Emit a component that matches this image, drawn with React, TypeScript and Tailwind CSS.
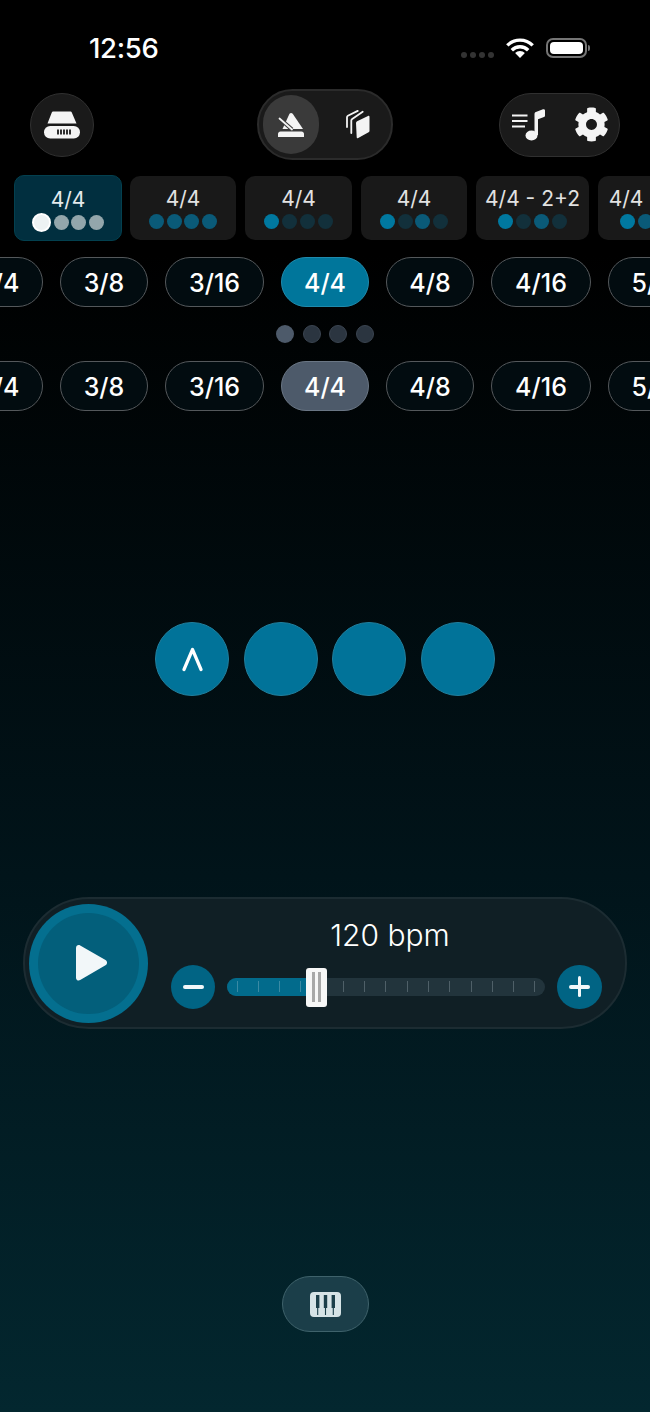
import { FaCog } from 'react-icons/fa';

type DotKind = 'strong' | 'mid' | 'faint';

interface BarCard {
  label: string;
  dots: DotKind[];
  width: string;
}

const dotClass: Record<DotKind, string> = {
  strong: 'bg-[#00789f]',
  mid: 'bg-[#0a5a78]',
  faint: 'bg-[#12303b]',
};

const cards: BarCard[] = [
  { label: '4/4', dots: ['mid', 'mid', 'mid', 'mid'], width: 'w-[106px]' },
  { label: '4/4', dots: ['strong', 'faint', 'faint', 'faint'], width: 'w-[107px]' },
  { label: '4/4', dots: ['strong', 'faint', 'mid', 'faint'], width: 'w-[106px]' },
  { label: '4/4 - 2+2', dots: ['strong', 'faint', 'mid', 'faint'], width: 'w-[113px]' },
  { label: '4/4 - 3+1', dots: ['strong', 'mid', 'faint', 'faint'], width: 'w-[113px]' },
];

const meters = [
  { label: '2/4', width: 'w-[88px]' },
  { label: '3/8', width: 'w-[88px]' },
  { label: '3/16', width: 'w-[99px]' },
  { label: '4/4', width: 'w-[88px]', selected: true },
  { label: '4/8', width: 'w-[88px]' },
  { label: '4/16', width: 'w-[100px]' },
  { label: '5/4', width: 'w-[88px]' },
];

function DriveIcon() {
  return (
    <svg width="36" height="28" viewBox="0 0 36 28">
      <path d="M9.5 0.5h16.5c1 0 1.7.5 2 1.4L32.5 12.5H3.5L7.6 1.9C8 1 8.6.5 9.5.5z" fill="#f4f4f4" />
      <rect x="0" y="15" width="36" height="12.5" rx="6.2" fill="#f4f4f4" />
      <path d="M14 18.5v5M17 18.5v5M20 18.5v5M23 18.5v5M26 18.5v5" stroke="#1a1a1a" strokeWidth="1.8" />
    </svg>
  );
}

function MetronomeIcon() {
  return (
    <svg width="26" height="24" viewBox="0 0 26 24">
      <path d="M11.5 .8c.9-1 2.300-1 3.200 0L25 16H4.500z" fill="#f4f4f4" />
      <path d="M1.500 5.500 14 16.500" stroke="#3a3a3a" strokeWidth="4" />
      <path d="M1.500 5.500 14 16.500" stroke="#f4f4f4" strokeWidth="1.800" strokeLinecap="round" />
      <path d="M2.500 18.500h21c1.400 0 2.500 1.200 2.500 2.600V24H0v-2.900c0-1.400 1.100-2.600 2.500-2.600z" fill="#f4f4f4" />
    </svg>
  );
}

function StackIcon() {
  return (
    <svg width="25" height="29" viewBox="0 0 25 29">
      <path d="M10 13c0-.8.4-1.300 1.100-1.700L22 5.900c.8-.4 1.500 0 1.500.9v14c0 .7-.3 1.200-.9 1.500l-10.400 5.800c-.9.5-1.500.1-1.500-.8z" fill="#f4f4f4" />
      <path d="M5.300 23V10.600c0-.7.3-1.200.9-1.600L16.700 1.800" stroke="#f4f4f4" strokeWidth="1.800" fill="none" strokeLinecap="round" />
      <path d="M1 17V7.300c0-.7.3-1.200.9-1.500L11.700 .9" stroke="#f4f4f4" strokeWidth="1.800" fill="none" strokeLinecap="round" />
    </svg>
  );
}

function MusicListIcon() {
  return (
    <svg width="34" height="33" viewBox="0 0 34 33">
      <path d="M0 7.5h15.5M0 13h15.5M0 18.5h13" stroke="#f4f4f4" strokeWidth="2" />
      <ellipse cx="19.5" cy="27.5" rx="6" ry="5" fill="#f4f4f4" />
      <path d="M22.5 27V6c0-1 .4-1.700 1.400-2.100L31 1.300c1.200-.4 2 .2 2 1.300v5c0 .8-.3 1.200-1 1.500l-6 2.200V27z" fill="#f4f4f4" />
    </svg>
  );
}

function WifiIcon() {
  return (
    <svg width="28" height="20" viewBox="0 0 28 20">
      <path d="M1.3 7.400a18 18 0 0 1 25.400 0" stroke="#fff" strokeWidth="3.4" fill="none" />
      <path d="M5.800 12.200a11.500 11.500 0 0 1 16.400 0" stroke="#fff" strokeWidth="3.4" fill="none" />
      <path d="M14 20l-4.900-5a6.800 6.800 0 0 1 9.800 0z" fill="#fff" />
    </svg>
  );
}

function PianoIcon() {
  return (
    <svg width="31" height="25" viewBox="0 0 31 25">
      <rect x="1" y="1" width="29" height="23" rx="3" fill="#d6e3e6" stroke="#d6e3e6" strokeWidth="2" />
      <path d="M7.700 16v7M15.500 16v7M23.300 16v7" stroke="#1b3e49" strokeWidth="1.1" />
      <rect x="6" y="3" width="3.4" height="13" fill="#1b3e49" />
      <rect x="13.800" y="3" width="3.4" height="13" fill="#1b3e49" />
      <rect x="21.600" y="3" width="3.4" height="13" fill="#1b3e49" />
    </svg>
  );
}

function MeterRow({ selectedClass }: { selectedClass: string }) {
  return (
    <div className="flex gap-[17px] ml-[-45px] h-[50px]">
      {meters.map((meter, i) => (
        <div
          key={i}
          className={`${meter.width} shrink-0 h-[50px] rounded-[25px] border-[1.5px] flex items-center justify-center pt-[3px] text-[25px] font-medium text-white ${
            meter.selected ? selectedClass : 'bg-[#020c10] border-[#54585b]'
          }`}
        >
          {meter.label}
        </div>
      ))}
    </div>
  );
}

export default function App() {
  return (
    <div
      className="w-[650px] h-[1412px] overflow-hidden flex flex-col bg-[linear-gradient(180deg,#000000_0%,#000000_18%,#01141a_62%,#03272f_100%)] text-white"
      style={{ fontFamily: 'Inter, "Noto Sans", sans-serif' }}
    >
      {/* Status bar */}
      <div className="h-[89px] shrink-0 flex items-start justify-between pt-[35px] pl-[89px] pr-[60px]">
        <span className="text-[27.5px] leading-[26px] font-medium tracking-[-0.3px]">12:56</span>
        <div className="flex items-start gap-[12px] mt-[3px]">
          <div className="flex gap-[2.7px] mt-[14px]">
            <span className="w-[6px] h-[6px] rounded-full bg-[#333333]" />
            <span className="w-[6px] h-[6px] rounded-full bg-[#333333]" />
            <span className="w-[6px] h-[6px] rounded-full bg-[#333333]" />
            <span className="w-[6px] h-[6px] rounded-full bg-[#333333]" />
          </div>
          <WifiIcon />
          <div className="flex items-center gap-[1.5px]">
            <div className="w-[41px] h-[20px] rounded-[7px] border-2 border-[#757575] p-[2px]">
              <div className="w-full h-full rounded-[4px] bg-white" />
            </div>
            <div className="w-[2px] h-[6px] rounded-r-full bg-[#757575]" />
          </div>
        </div>
      </div>

      {/* Toolbar */}
      <div className="h-[71px] shrink-0 grid grid-cols-[1fr_auto_1fr] items-center px-[30px]">
        <div className="justify-self-start w-[64px] h-[64px] rounded-full bg-[#1a1a1a] border border-[#303030] flex items-center justify-center">
          <DriveIcon />
        </div>
        <div className="w-[136px] h-[71px] rounded-[36px] bg-[#1a1a1a] border-2 border-[#2b2b2b] flex items-center pl-[4px]">
          <div className="w-[56px] h-[59px] rounded-full bg-[#3a3a3a] flex items-center justify-center">
            <MetronomeIcon />
          </div>
          <div className="ml-[27px]">
            <StackIcon />
          </div>
        </div>
        <div className="justify-self-end w-[121px] h-[64px] rounded-[32px] bg-[#1a1a1a] border border-[#303030] flex items-center pl-[12px]">
          <MusicListIcon />
          <FaCog className="ml-[28px] text-[#f4f4f4]" size={35} />
        </div>
      </div>

      {/* Bar presets */}
      <div className="mt-[15px] h-[66px] shrink-0 flex items-center gap-[9px] pl-[14px]">
        <div className="w-[108px] mr-[-1px] h-[66px] shrink-0 rounded-[10px] bg-[#012f3f] border border-[#03404f] flex flex-col items-center pt-[11px]">
          <span className="text-[21px] leading-[26px] text-[#e4eaec]">4/4</span>
          <div className="flex items-center gap-[2.7px]">
            <span className="w-[19px] h-[19px] rounded-full bg-[#edf2f3] border-2 border-white" />
            <span className="w-[15px] h-[15px] rounded-full bg-[#93a6ab]" />
            <span className="w-[15px] h-[15px] rounded-full bg-[#93a6ab]" />
            <span className="w-[15px] h-[15px] rounded-full bg-[#93a6ab]" />
          </div>
        </div>
        {cards.map((card, i) => (
          <div
            key={i}
            className={`${card.width} h-[64px] shrink-0 rounded-[10px] bg-[#191919] flex flex-col items-center pt-[10px]`}
          >
            <span className="text-[21px] leading-[26px] text-[#e2e2e2] whitespace-nowrap">{card.label}</span>
            <div className="flex items-center gap-[2.7px] mt-[2px]">
              {card.dots.map((dot, j) => (
                <span key={j} className={`w-[15px] h-[15px] rounded-full ${dotClass[dot]}`} />
              ))}
            </div>
          </div>
        ))}
      </div>

      {/* Meter selector */}
      <div className="mt-[16px]">
        <MeterRow selectedClass="bg-[#00769b] border-[#1f8aac]" />
      </div>

      {/* Page dots */}
      <div className="mt-[18px] flex justify-center gap-[8.5px]">
        <span className="w-[18px] h-[18px] rounded-full bg-[#4d5a6a]" />
        <span className="w-[18px] h-[18px] rounded-full bg-[#2b3540] border border-[#3a4450]" />
        <span className="w-[18px] h-[18px] rounded-full bg-[#2b3540] border border-[#3a4450]" />
        <span className="w-[18px] h-[18px] rounded-full bg-[#2b3540] border border-[#3a4450]" />
      </div>

      <div className="mt-[18px]">
        <MeterRow selectedClass="bg-[#4d5a6a] border-[#6a7684]" />
      </div>

      {/* Beats */}
      <div className="mt-[211px] flex justify-center gap-[14.5px]">
        <div className="w-[74px] h-[74px] rounded-full bg-[#017399] border border-[#217f9d] flex items-center justify-center">
          <svg width="21" height="25" viewBox="0 0 21 25">
            <path d="M2 22.500 10.500 2.500 19 22.500" stroke="#fff" strokeWidth="3.2" fill="none" strokeLinecap="round" strokeLinejoin="round" />
          </svg>
        </div>
        <div className="w-[74px] h-[74px] rounded-full bg-[#017399] border border-[#217f9d]" />
        <div className="w-[74px] h-[74px] rounded-full bg-[#017399] border border-[#217f9d]" />
        <div className="w-[74px] h-[74px] rounded-full bg-[#017399] border border-[#217f9d]" />
      </div>

      {/* Transport panel */}
      <div className="mt-[201px] ml-[23px] w-[604px] h-[132px] shrink-0 rounded-[66px] bg-[#101f25] border-2 border-[#1c2c32] flex items-center pl-[4px]">
        <div className="w-[119px] h-[119px] shrink-0 rounded-full bg-[#046f8f] flex items-center justify-center">
          <div className="w-[101px] h-[101px] rounded-full bg-[#035f7b] flex items-center justify-center">
            <svg width="31" height="36" viewBox="0 0 31 36" className="ml-[6px]">
              <path d="M0 3C0 .7 2.200-.6 4.200.5l25.300 14.600c2 1.200 2 4 0 5.200L4.200 35.100C2.200 36.300 0 35 0 32.700z" fill="#f2f7f9" />
            </svg>
          </div>
        </div>
        <div className="ml-[23px] w-[432px] flex flex-col">
          <div className="h-[37px] pl-[6px] flex items-center justify-center text-[30px] font-light text-white mb-[10.5px]">
            120 bpm
          </div>
          <div className="flex items-center h-[44px]">
            <div className="w-[44px] h-[44px] rounded-full bg-[#016484] flex items-center justify-center">
              <span className="w-[21px] h-[3.5px] rounded-full bg-[#f2f7f9]" />
            </div>
            <div className="relative ml-[12px] w-[318px] h-[18px] rounded-full bg-[#22343c]">
              <div className="absolute left-0 top-0 h-full w-[85px] rounded-l-full bg-[#026b8c]" />
              <div className="absolute inset-0 flex items-center justify-between px-[9.5px]">
                {Array.from({ length: 15 }).map((_, i) => (
                  <span key={i} className={`w-[1px] h-[11px] ${i < 4 ? 'bg-[#3a8aa4]' : 'bg-[#4f6068]'}`} />
                ))}
              </div>
              <div className="absolute left-[79px] top-[-10px] w-[21px] h-[39px] rounded-[3px] bg-[#f7f7f7] flex items-center justify-center gap-[3.5px]">
                <span className="w-[3px] h-[30px] bg-[#a8a8a8]" />
                <span className="w-[3px] h-[30px] bg-[#a8a8a8]" />
              </div>
            </div>
            <div className="ml-[12px] w-[45px] h-[44px] rounded-full bg-[#016484] relative flex items-center justify-center">
              <span className="w-[21px] h-[3.5px] rounded-full bg-[#f2f7f9]" />
              <span className="absolute w-[3.5px] h-[21px] rounded-full bg-[#f2f7f9]" />
            </div>
          </div>
        </div>
      </div>

      {/* Keyboard toggle */}
      <div className="mt-[247px] flex justify-center">
        <div className="w-[87px] h-[56px] rounded-[28px] bg-[#1b3e49] border-[1.5px] border-[#3f626b] flex items-center justify-center">
          <PianoIcon />
        </div>
      </div>
    </div>
  );
}
